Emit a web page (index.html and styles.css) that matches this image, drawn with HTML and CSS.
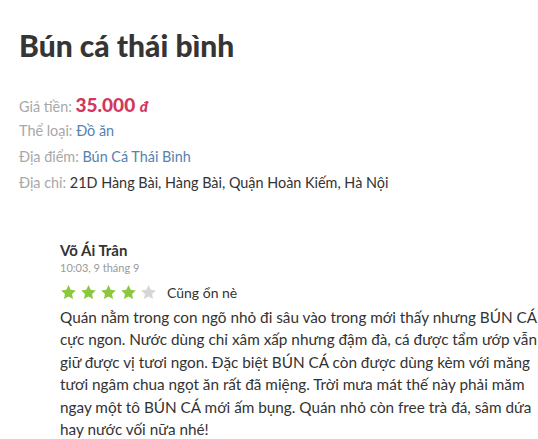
FILE: index.html
```html
<!DOCTYPE html>
<html lang="vi">
<head>
<meta charset="utf-8">
<title>Bún cá thái bình</title>
<link rel="stylesheet" href="styles.css">
</head>
<body>
<main class="page">
  <h1 class="title">Bún cá thái bình</h1>
  <ul class="info">
    <li><span class="label">Giá tiền:</span> <span class="price">35.000 <span class="currency">đ</span></span></li>
    <li><span class="label">Thể loại:</span> <a class="link" href="#">Đồ ăn</a></li>
    <li><span class="label">Địa điểm:</span> <a class="link" href="#">Bún Cá Thái Bình</a></li>
    <li><span class="label">Địa chỉ:</span> <span class="value">21D Hàng Bài, Hàng Bài, Quận Hoàn Kiếm, Hà Nội</span></li>
  </ul>
  <section class="review">
    <div class="author">Võ Ái Trân</div>
    <div class="date">10:03, 9 tháng 9</div>
    <div class="rating">
      <span class="stars">
        <svg class="star on" viewBox="0 0 24 24"><path d="M12 1.5l3.1 6.6 7.2.9-5.3 5 1.4 7.1L12 17.6l-6.4 3.5 1.4-7.1-5.3-5 7.2-.9z"/></svg>
        <svg class="star on" viewBox="0 0 24 24"><path d="M12 1.5l3.1 6.6 7.2.9-5.3 5 1.4 7.1L12 17.6l-6.4 3.5 1.4-7.1-5.3-5 7.2-.9z"/></svg>
        <svg class="star on" viewBox="0 0 24 24"><path d="M12 1.5l3.1 6.6 7.2.9-5.3 5 1.4 7.1L12 17.6l-6.4 3.5 1.4-7.1-5.3-5 7.2-.9z"/></svg>
        <svg class="star on" viewBox="0 0 24 24"><path d="M12 1.5l3.1 6.6 7.2.9-5.3 5 1.4 7.1L12 17.6l-6.4 3.5 1.4-7.1-5.3-5 7.2-.9z"/></svg>
        <svg class="star off" viewBox="0 0 24 24"><path d="M12 1.5l3.1 6.6 7.2.9-5.3 5 1.4 7.1L12 17.6l-6.4 3.5 1.4-7.1-5.3-5 7.2-.9z"/></svg>
      </span>
      <span class="rating-text">Cũng ổn nè</span>
    </div>
    <p class="body">Quán nằm trong con ngõ nhỏ đi sâu vào trong mới thấy nhưng BÚN CÁ cực ngon. Nước dùng chỉ xâm xấp nhưng đậm đà, cá được tẩm ướp vẫn giữ được vị tươi ngon. Đặc biệt BÚN CÁ còn được dùng kèm với măng tươi ngâm chua ngọt ăn rất đã miệng. Trời mưa mát thế này phải măm ngay một tô BÚN CÁ mới ấm bụng. Quán nhỏ còn free trà đá, sâm dứa hay nước vối nữa nhé!</p>
  </section>
</main>
</body>
</html>
```
FILE: styles.css
```css
html, body {
  margin: 0;
  padding: 0;
  background: #fff;
}
body {
  font-family: Lato, "Liberation Sans", sans-serif;
  color: #333;
}
.page {
  padding: 26px 0 0 19px;
}
.title {
  margin: 0;
  font-size: 30px;
  font-weight: 900;
  line-height: 38px;
  color: #353535;
}
.info {
  list-style: none;
  margin: 28px 0 0;
  padding: 0;
  font-size: 14.4px;
  line-height: 26px;
}
.info li {
  height: 26px;
}
.label {
  color: #a8a8a8;
}
.price {
  color: #d2385c;
  font-weight: 900;
  font-size: 19px;
}
.currency {
  font-size: 15px;
  font-style: italic;
}
.link {
  color: #5582b0;
  text-decoration: none;
}
.value {
  color: #333;
}
.review {
  margin-top: 45px;
  padding-left: 41px;
}
.author {
  font-size: 15px;
  font-weight: 700;
  line-height: 18px;
  color: #333;
}
.date {
  font-size: 11px;
  line-height: 17px;
  color: #9a9a9a;
}
.rating {
  display: flex;
  align-items: center;
  gap: 10px;
  margin-top: 6px;
  height: 20px;
}
.stars {
  display: flex;
  gap: 3px;
}
.star {
  width: 17px;
  height: 17px;
  display: block;
}
.star.on { fill: #8cc83c; }
.star.off { fill: #d6d6d6; }
.rating-text {
  font-size: 14px;
  color: #333;
}
.body {
  margin: 4px 0 0;
  font-size: 15.3px;
  line-height: 22.4px;
  color: #333;
}
```
